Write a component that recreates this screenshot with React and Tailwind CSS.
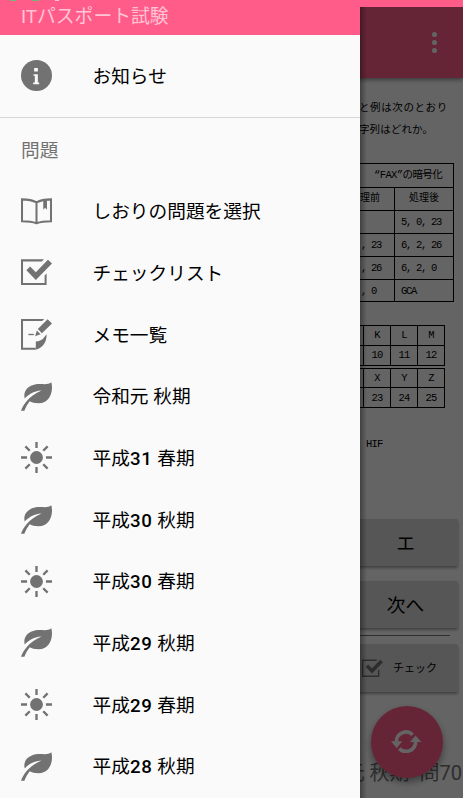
import React from 'react';

const jp = "font-[Roboto,'Noto_Sans_CJK_JP',sans-serif]";

function InfoIcon() {
  return (
    <svg viewBox="0 0 92 92" className="w-[31px] h-[31px]" fill="#727272">
      <circle cx="46" cy="46" r="46" />
      <path d="M39 24h11v10H39zM37 42h13v25h4v5H36v-5h5V47h-4z" fill="#fafafa" />
    </svg>
  );
}

function BookIcon() {
  return (
    <svg viewBox="0 0 92 92" className="w-[31px] h-[31px]" fill="none" stroke="#727272" strokeWidth="6">
      <path d="M3 10Q30 10 46 19Q62 10 89 10V75Q62 75 46 81Q30 75 3 75Z M46 19V81" />
      <path d="M66 12h11v29l-5.500-6l-5.500 6z" fill="#727272" stroke="none" />
    </svg>
  );
}

function CheckIcon({ className = 'w-[31px] h-[31px]' }) {
  return (
    <svg viewBox="0 0 92 92" className={className} fill="#727272">
      <path d="M0 7H68L62 13H6V77H70V55L76 49V83H0Z" />
      <path d="M16 39L27 28L44 45L80 8L92 19L44 68Z" />
    </svg>
  );
}

function MemoIcon() {
  return (
    <svg viewBox="0 0 92 92" className="w-[31px] h-[31px]" fill="#727272">
      <path d="M0 0H69L63 6H6V85H42V91H0Z" />
      <path d="M41 91C46 84 43 75 44 67C54 67 64 63 70 53L76 45C77 70 61 89 41 91Z" />
      <path d="M42 51L47 34L58 45ZM50 30L79 1L92 13L62 42Z" />
      <path d="M22 44h16v4H22z" />
    </svg>
  );
}

function LeafIcon() {
  return (
    <svg viewBox="0 0 92 92" className="w-[31px] h-[31px]" fill="#727272">
      <path d="M90 4C97 30 86 66 52 66C40 66 32 63 26 60C19 68 14 79 10 88H0C7 70 22 45 61 28C36 30 22 40 11 52C6 32 18 15 44 10C62 7 78 14 90 4Z" />
    </svg>
  );
}

function SunIcon() {
  return (
    <svg viewBox="0 0 92 92" className="w-[31px] h-[31px]" fill="#727272" stroke="#727272" strokeWidth="7">
      <circle cx="46" cy="46" r="19" stroke="none" />
      <path d="M46 0V18M46 74V92M0 46H18M74 46H92M13 13L26 26M66 66L79 79M79 13L66 26M26 66L13 79" />
    </svg>
  );
}

function SyncIcon() {
  return (
    <svg viewBox="0 0 92 70" className="w-[30.6px] h-[23.4px]" fill="#fafafa">
      <path d="M16 35A29 29 0 0 1 65 14M74 35A29 29 0 0 1 25 56" fill="none" stroke="#fafafa" strokeWidth="11" />
      <path d="M0 34H34L17 54ZM57 36H91L74 16Z" />
    </svg>
  );
}

const items = [
  { icon: BookIcon, label: 'しおりの問題を選択' },
  { icon: CheckIcon, label: 'チェックリスト' },
  { icon: MemoIcon, label: 'メモ一覧' },
  { icon: LeafIcon, label: '令和元', season: '秋期' },
  { icon: SunIcon, label: '平成', year: 31, season: '春期' },
  { icon: LeafIcon, label: '平成', year: 30, season: '秋期' },
  { icon: SunIcon, label: '平成', year: 30, season: '春期' },
  { icon: LeafIcon, label: '平成', year: 29, season: '秋期' },
  { icon: SunIcon, label: '平成', year: 29, season: '春期' },
  { icon: LeafIcon, label: '平成', year: 28, season: '秋期' },
];

function DrawerItem({ icon: Icon, label, year, season }) {
  return (
    <li className="flex items-center h-[61.7px] pl-[20.5px]">
      <Icon />
      <span className="ml-[41px] pt-[3px] text-[18.7px] leading-none whitespace-nowrap text-black">
        {label}
        {year && <span className="font-medium tracking-[0.8px]">{year}</span>}
        {season && ` ${season}`}
      </span>
    </li>
  );
}

const cipherRows = [
  ['', '5, 0, 23'],
  [', 23', '6, 2, 26'],
  [', 26', '6, 2, 0'],
  [', 0', 'GCA'],
];

function LetterTable({ rows }) {
  return (
    <div className="w-[85px] border-y-[1.500px] border-r border-black">
      {rows.map((row, i) => (
        <div key={i} className={i ? 'flex border-t border-black' : 'flex'}>
          <span className="w-[3px] h-[18.8px]" />
          {row.map(cell => (
            <span key={cell} className="w-[27px] h-[18.8px] border-l border-black flex items-center justify-center">{cell}</span>
          ))}
        </div>
      ))}
    </div>
  );
}

function Question() {
  return (
    <div className="h-[441px] pt-[18px] text-black font-['Noto_Sans_CJK_JP',sans-serif]">
      <p className="-ml-px text-[10.5px] leading-[22px] tracking-[0.6px] whitespace-nowrap">と例は次のとおり</p>
      <p className="-ml-px text-[10.5px] leading-[22px] tracking-[0.1px] whitespace-nowrap">字列はどれか。</p>

      <div className="mt-[23px] w-[94px] h-[139px] border-y border-r border-black text-[10.5px] leading-none font-['Liberation_Mono','Noto_Sans_CJK_JP',monospace]">
        <div className="h-[23px] pl-[14px] flex items-center whitespace-nowrap tracking-[-0.6px]">“FAX”の暗号化</div>
        <div className="h-[23px] flex border-t border-black">
          <span className="w-[34px] flex items-center text-[10px]">理前</span>
          <span className="flex-1 border-l border-black flex items-center justify-center text-[10px]">処理後</span>
        </div>
        {cipherRows.map(([before, after]) => (
          <div key={after} className="h-[23px] flex border-t border-black whitespace-pre tracking-[-1.3px]">
            <span className="w-[34px] flex items-center pl-px">{before}</span>
            <span className="flex-1 border-l border-black flex items-center pl-[6px]">{after}</span>
          </div>
        ))}
      </div>

      <div className="mt-[23px] text-[10.5px] leading-none tracking-[-0.8px] font-['Liberation_Mono',monospace]">
        <LetterTable rows={[['K', 'L', 'M'], ['10', '11', '12']]} />
        <div className="h-[2px]" />
        <LetterTable rows={[['X', 'Y', 'Z'], ['23', '24', '25']]} />
        <p className="mt-[31px] pl-[6px]">HIF</p>
      </div>
    </div>
  );
}

const button = 'w-[105px] -ml-[7px] rounded-[2px] bg-[#d6d6d6] text-black flex items-center shadow-[0_2px_3px_rgba(0,0,0,0.35)]';

function Main() {
  return (
    <div className="h-[791px] bg-[#fafafa] overflow-hidden">
      <header className="relative h-[71px] bg-[#ff5c8a] flex flex-col items-end justify-center gap-[2.5px] pr-[26px] shadow-[0_2px_4px_rgba(0,0,0,0.4)]">
        <i className="size-[5.5px] rounded-full bg-[#fafafa]" />
        <i className="size-[5.5px] rounded-full bg-[#fafafa]" />
        <i className="size-[5.5px] rounded-full bg-[#fafafa]" />
      </header>
      <div className="pl-[360px]">
        <Question />
        <button className={`${button} justify-center pt-[3px] h-[47px] text-[18.7px]`}>エ</button>
        <button className={`${button} justify-center pt-[3px] h-[47px] mt-[15px] text-[18.7px]`}>次へ</button>
        <div className="mt-[7px] w-[90px] h-px bg-[#777]" />
        <button className={`${button} h-[48px] mt-[8px] gap-[10px] pl-[9px] text-[11px]`}>
          <CheckIcon className="w-[21px] h-[21px]" />
          <span className="pt-[2px]">チェック</span>
        </button>
        <p className="mt-[67px] flex justify-end pr-px text-[20px] leading-[28px] whitespace-nowrap text-[#737373]">元 秋期&nbsp; 問70</p>
      </div>
    </div>
  );
}

export default function App() {
  return (
    <div className={`relative w-[463px] h-[800px] overflow-hidden bg-white ${jp}`}>
      <div className="h-[7px] bg-[#ff5c8a]" />
      <Main />

      <button className="absolute left-[370.5px] top-[705.5px] size-[72px] rounded-full bg-[#ff5c8a] flex items-center justify-center shadow-[0_4px_7px_rgba(0,0,0,0.4)]">
        <SyncIcon />
      </button>

      <div className="absolute left-0 top-[7px] w-full h-[791px] bg-black/60" />

      {/* navigation drawer */}
      <nav className="absolute left-0 top-0 w-[360px] h-[798px] overflow-hidden bg-[#fafafa]">
        <div className="relative h-[34.500px] bg-[#ff5c8a] pl-[21px] pt-[6px]">
          <div className="absolute left-[10px] top-0 flex gap-[16px]">
            <i className="w-[6px] h-px bg-[#75b77b]" />
            <i className="w-[7px] h-px bg-[#75b77b]" />
            <i className="w-[4px] h-px bg-[#ffc0d2]" />
          </div>
          <h1 className="text-[18.8px] leading-[22px] text-[#ffc4d5]">ITパスポート試験</h1>
        </div>
        <ul className="pt-[10.500px] pb-[10.500px] border-b border-[#d6d6d6]">
          <DrawerItem icon={InfoIcon} label="お知らせ" />
        </ul>
        <h2 className="h-[62px] flex items-center pl-[21px] pt-[4px] text-[18.7px] leading-none text-[#727272]">問題</h2>
        <ul>
          {items.map((item, i) => <DrawerItem key={i} {...item} />)}
        </ul>
      </nav>
      <div className="absolute left-[360px] top-[7px] w-[7px] h-[791px] bg-linear-to-r from-black/35 to-transparent" />
    </div>
  );
}
